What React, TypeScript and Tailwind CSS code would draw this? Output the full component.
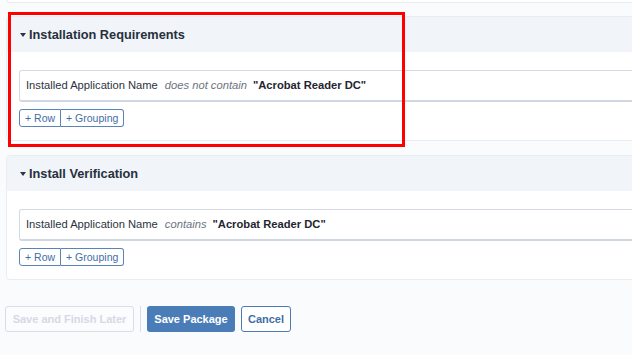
import React from "react";

function Caret() {
  return (
    <svg width="6" height="4" viewBox="0 0 6 4" className="shrink-0">
      <path d="M0 0 L6 0 L3 4 Z" fill="#2a3546" />
    </svg>
  );
}

function Section({ title, op }: { title: string; op: string }) {
  return (
    <div className="rounded-[4px] border border-[#e9edf2] bg-white overflow-hidden">
      <div className="h-[35px] bg-[#f1f4f8] flex items-center gap-[3px] pl-[13px]">
        <Caret />
        <span className="text-[12.75px] font-bold text-[#27303d]">{title}</span>
      </div>
      <div className="pt-[18px] pb-[13px] pl-[12px]">
        <div className="h-[32px] rounded-[3px] border border-[#d3dae3] border-b-2 border-b-[#cfd7e1] flex items-center pl-[6px] text-[11.2px] text-[#2b3440]">
          <span>Installed Application Name</span>
          <span className="ml-[7px] italic text-[#6b7480]">{op}</span>
          <span className="ml-[6px] font-bold text-[#1f2630]">"Acrobat Reader DC"</span>
        </div>
        <div className="flex mt-[7px]">
          <button className="h-[18px] px-[5px] border border-[#5b84b6] rounded-l-[3px] text-[10.5px] text-[#3f6ea6] leading-none">
            + Row
          </button>
          <button className="h-[18px] px-[5px] border border-l-0 border-[#5b84b6] rounded-r-[3px] text-[10.5px] text-[#3f6ea6] leading-none">
            + Grouping
          </button>
        </div>
      </div>
    </div>
  );
}

export default function App() {
  return (
    <div
      className="w-[632px] h-[355px] overflow-hidden bg-[#f9fbfd] relative"
      style={{ fontFamily: '"Liberation Sans", Arial, sans-serif' }}
    >
      <div className="w-[680px] pl-[6px]">
        <div className="h-[4px] -mt-[1px] rounded-b-[4px] border border-t-0 border-[#e9edf2] bg-white" />
        <div className="mt-[13px]">
          <Section title="Installation Requirements" op="does not contain" />
        </div>
        <div className="mt-[14px]">
          <Section title="Install Verification" op="contains" />
        </div>
        <div className="mt-[26px] flex items-center">
          <button className="h-[26px] w-[129px] -ml-[1px] border border-[#d8dee7] rounded-[3px] text-[11px] font-bold text-[#d3dae4] bg-white/40">
            Save and Finish Later
          </button>
          <div className="w-px h-[26px] bg-[#d8dee6] mx-[6px]" />
          <button className="h-[26px] w-[88px] rounded-[3px] bg-[#4a7db8] text-white text-[11px] font-bold">
            Save Package
          </button>
          <button className="ml-[6px] h-[26px] w-[50px] rounded-[3px] border border-[#4a7db8] bg-white text-[#3f6ea6] text-[11px] font-bold">
            Cancel
          </button>
        </div>
      </div>
      <div className="absolute left-[8px] top-[12px] w-[397px] h-[135px] border-[3px] border-[#ff0000]" />
    </div>
  );
}
